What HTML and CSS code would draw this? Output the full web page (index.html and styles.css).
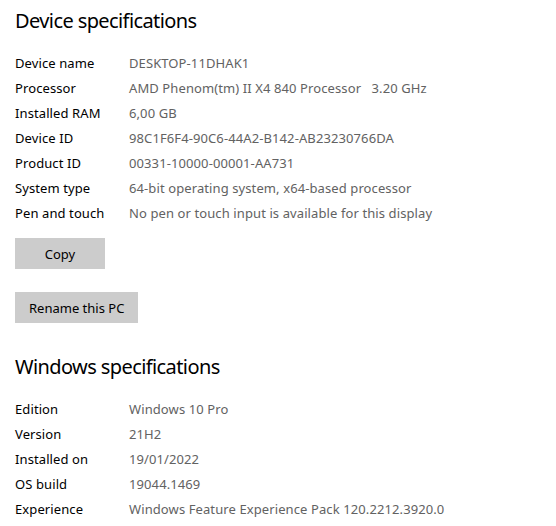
FILE: index.html
```html
<!DOCTYPE html>
<html>
<head>
<meta charset="utf-8">
<link rel="stylesheet" href="styles.css">
</head>
<body>
<section class="section">
  <h2 class="title">Device specifications</h2>
  <dl class="specs">
    <div class="row"><dt>Device name</dt><dd>DESKTOP-11DHAK1</dd></div>
    <div class="row"><dt>Processor</dt><dd>AMD Phenom(tm) II X4 840 Processor&nbsp;&nbsp;&nbsp;3.20 GHz</dd></div>
    <div class="row"><dt>Installed RAM</dt><dd>6,00 GB</dd></div>
    <div class="row"><dt>Device ID</dt><dd>98C1F6F4-90C6-44A2-B142-AB23230766DA</dd></div>
    <div class="row"><dt>Product ID</dt><dd>00331-10000-00001-AA731</dd></div>
    <div class="row"><dt>System type</dt><dd>64-bit operating system, x64-based processor</dd></div>
    <div class="row"><dt>Pen and touch</dt><dd>No pen or touch input is available for this display</dd></div>
  </dl>
  <div class="actions">
    <button class="btn btn-copy">Copy</button>
    <button class="btn">Rename this PC</button>
  </div>
</section>
<section class="section section-win">
  <h2 class="title">Windows specifications</h2>
  <dl class="specs">
    <div class="row"><dt>Edition</dt><dd>Windows 10 Pro</dd></div>
    <div class="row"><dt>Version</dt><dd>21H2</dd></div>
    <div class="row"><dt>Installed on</dt><dd>19/01/2022</dd></div>
    <div class="row"><dt>OS build</dt><dd>19044.1469</dd></div>
    <div class="row"><dt>Experience</dt><dd>Windows Feature Experience Pack 120.2212.3920.0</dd></div>
  </dl>
</section>
</body>
</html>
```

FILE: styles.css
```css
html, body {
  margin: 0;
  padding: 0;
  background: #ffffff;
}
body {
  font-family: "Noto Sans", "Open Sans", sans-serif;
  color: #000000;
  padding: 0 0 0 15px;
}
.title {
  margin: 0;
  font-weight: 400;
  font-size: 20px;
  letter-spacing: -0.6px;
  line-height: 28px;
  padding-top: 7px;
  color: #000;
}
.specs {
  margin: 15px 0 0 0;
  padding: 0;
}
.row {
  display: flex;
  height: 25px;
  align-items: center;
  font-size: 13px;
  letter-spacing: 0.1px;
}
.row dt {
  width: 114px;
  flex: none;
  margin: 0;
  color: #000;
}
.row dd {
  margin: 0;
  color: #626262;
  white-space: nowrap;
}
.actions {
  display: flex;
  flex-direction: column;
  align-items: flex-start;
  gap: 23px;
  margin-top: 13px;
}
.btn {
  font-family: inherit;
  font-size: 13px;
  color: #000;
  background: #cccccc;
  border: none;
  height: 31px;
  padding: 0 14px;
  margin: 0;
}
.btn-copy {
  width: 90px;
}
.section-win {
  margin-top: 23px;
}
```
